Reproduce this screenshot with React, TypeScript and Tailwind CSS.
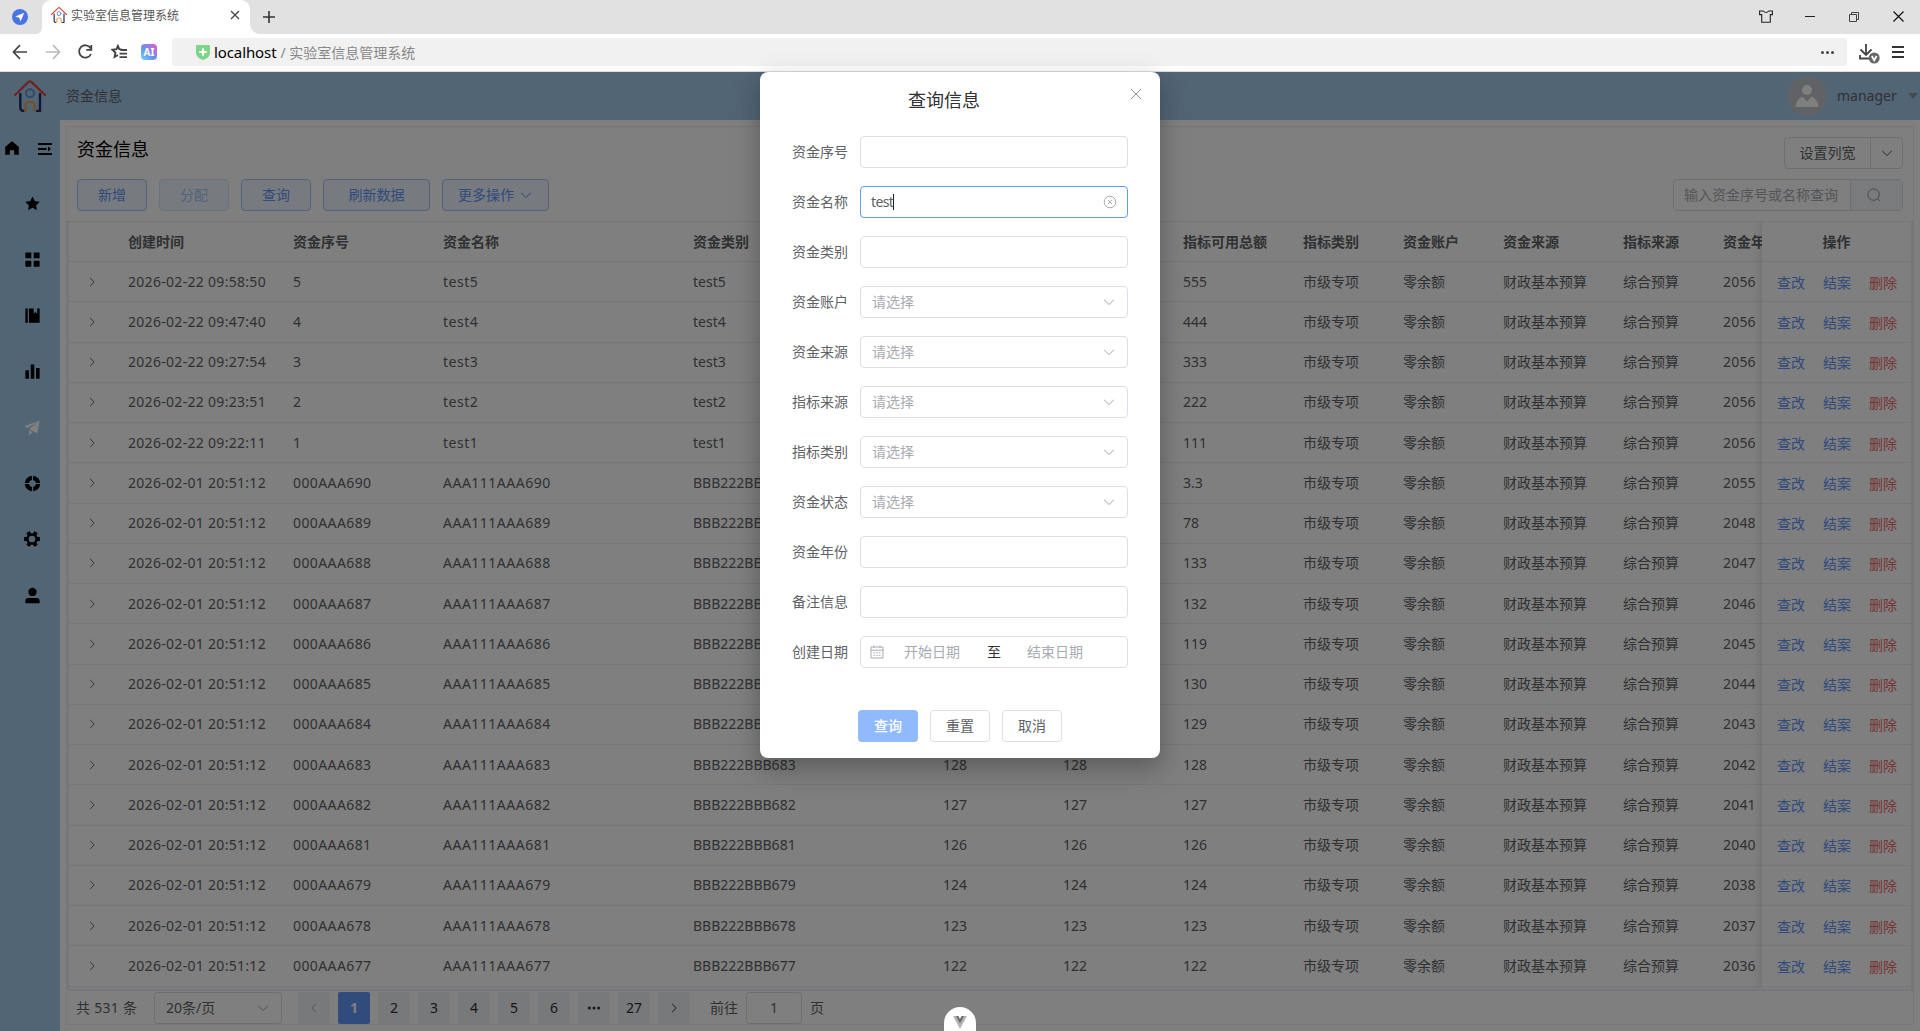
import React, { useState } from 'react';

const ICONS = {
  home: 'M512 128 128 447.936V896h255.936V640H640v256h255.936V447.936z',
  star: 'M283.84 867.84 512 747.776l228.16 119.936a6.4 6.4 0 0 0 9.28-6.72l-43.52-254.08 184.512-179.904a6.4 6.4 0 0 0-3.52-10.88l-255.104-37.12L517.76 147.904a6.4 6.4 0 0 0-11.52 0L392.192 379.072l-255.104 37.12a6.4 6.4 0 0 0-3.52 10.88L318.08 606.976l-43.584 254.08a6.4 6.4 0 0 0 9.28 6.72z',
  menu: 'M160 448a32 32 0 0 1-32-32V160.064a32 32 0 0 1 32-32h256a32 32 0 0 1 32 32V416a32 32 0 0 1-32 32zm448 0a32 32 0 0 1-32-32V160.064a32 32 0 0 1 32-32h255.936a32 32 0 0 1 32 32V416a32 32 0 0 1-32 32zM160 896a32 32 0 0 1-32-32V608a32 32 0 0 1 32-32h256a32 32 0 0 1 32 32v256a32 32 0 0 1-32 32zm448 0a32 32 0 0 1-32-32V608a32 32 0 0 1 32-32h255.936a32 32 0 0 1 32 32v256a32 32 0 0 1-32 32z',
  management: 'M576 128v288l96-96 96 96V128h128v768H320V128zm-448 0h128v768H128z',
  histogram: 'M416 896V128h192v768zm-288 0V448h192v448zm576 0V320h192v576z',
  promotion: 'm64 448 832-320-128 704-446.08-243.328L832 192 242.816 545.536zm256 512V657.024L512 768z',
  help: 'M926.784 480H701.312A192.512 192.512 0 0 0 544 322.688V97.216A416.064 416.064 0 0 1 926.784 480m0 64A416.064 416.064 0 0 1 544 926.784V701.312A192.512 192.512 0 0 0 701.312 544zM97.28 544h225.472A192.512 192.512 0 0 0 480 701.312v225.472A416.064 416.064 0 0 1 97.216 544zm0-64A416.064 416.064 0 0 1 480 97.216v225.472A192.512 192.512 0 0 0 322.688 480H97.216z',
  user: 'M288 320a224 224 0 1 0 448 0 224 224 0 1 0-448 0m544 608H160a32 32 0 0 1-32-32v-96a160 160 0 0 1 160-160h448a160 160 0 0 1 160 160v96a32 32 0 0 1-32 32z',
  arrowDown: 'M831.872 340.864 512 652.672 192.128 340.864a30.592 30.592 0 0 0-42.752 0 29.12 29.12 0 0 0 0 41.6L489.664 714.24a32 32 0 0 0 44.672 0l340.288-331.712a29.12 29.12 0 0 0 0-41.728 30.592 30.592 0 0 0-42.752 0z',
};

const Icon: React.FC<{ name: keyof typeof ICONS; className?: string }> = ({ name, className = '' }) => (
  <svg viewBox="0 0 1024 1024" fill="currentColor" className={`shrink-0 ${className}`}>
    <path d={ICONS[name]} />
  </svg>
);

const GearIcon = () => (
  <svg viewBox="0 0 16 16" className="h-4 w-4 shrink-0">
    <circle cx="8" cy="8" r="4.6" fill="none" stroke="currentColor" strokeWidth="2.5" />
    {[0, 60, 120, 180, 240, 300].map((angle) => (
      <rect key={angle} x="0.1" y="6.1" width="3" height="3.8" rx="0.5" fill="currentColor" transform={`rotate(${angle} 8 8)`} />
    ))}
  </svg>
);

const HouseLogo: React.FC<{ className?: string }> = ({ className = '' }) => (
  <svg viewBox="0 0 32 32" fill="none" strokeLinecap="round" strokeLinejoin="round" className={`shrink-0 ${className}`}>
    <path d="M1 15 L14.6 1.9 Q16 0.8 17.4 1.9 L31 15" stroke="#e0443e" strokeWidth="2.2" />
    <path d="M6.3 14 V27.5 Q6.5 31 9.5 31 M26 14 V31 H23" stroke="#2b2a6b" strokeWidth="2.4" />
    <circle cx="16" cy="13.2" r="4" stroke="#6c8fd6" strokeWidth="2" />
    <path d="M11.5 31 V25.5 Q11.5 22 16 22 Q20.5 22 20.5 25.5 V31" stroke="#e9a23f" strokeWidth="2.2" />
  </svg>
);

const columns = [
  { key: 'createTime', label: '创建时间', width: 'w-[165px]', tracking: 'tracking-[0.3px]' },
  { key: 'serial', label: '资金序号', width: 'w-[150px]', tracking: 'tracking-[0.4px]' },
  { key: 'name', label: '资金名称', width: 'w-[250px]', tracking: 'tracking-[0.5px]' },
  { key: 'category', label: '资金类别', width: 'w-[250px]', tracking: '' },
  { key: 'total', label: '资金总额', width: 'w-[120px]', tracking: '' },
  { key: 'quota', label: '指标总额', width: 'w-[120px]', tracking: '' },
  { key: 'available', label: '指标可用总额', width: 'w-[120px]', tracking: '' },
  { key: 'quotaType', label: '指标类别', width: 'w-[100px]', tracking: '' },
  { key: 'account', label: '资金账户', width: 'w-[100px]', tracking: '' },
  { key: 'source', label: '资金来源', width: 'w-[120px]', tracking: '' },
  { key: 'quotaSource', label: '指标来源', width: 'w-[100px]', tracking: '' },
  { key: 'year', label: '资金年份', width: 'w-[100px]', tracking: 'tracking-[0.2px]' },
];

type Row = Record<string, string>;

const makeRow = (createTime: string, serial: string, name: string, category: string, amount: string, year: string): Row => ({
  createTime,
  serial,
  name,
  category,
  total: amount,
  quota: amount,
  available: amount,
  quotaType: '市级专项',
  account: '零余额',
  source: '财政基本预算',
  quotaSource: '综合预算',
  year,
});

const batch: [number, string, string][] = [
  [690, '3.3', '2055'],
  [689, '78', '2048'],
  [688, '133', '2047'],
  [687, '132', '2046'],
  [686, '119', '2045'],
  [685, '130', '2044'],
  [684, '129', '2043'],
  [683, '128', '2042'],
  [682, '127', '2041'],
  [681, '126', '2040'],
  [679, '124', '2038'],
  [678, '123', '2037'],
  [677, '122', '2036'],
];

const rows: Row[] = [
  makeRow('2026-02-22 09:58:50', '5', 'test5', 'test5', '555', '2056'),
  makeRow('2026-02-22 09:47:40', '4', 'test4', 'test4', '444', '2056'),
  makeRow('2026-02-22 09:27:54', '3', 'test3', 'test3', '333', '2056'),
  makeRow('2026-02-22 09:23:51', '2', 'test2', 'test2', '222', '2056'),
  makeRow('2026-02-22 09:22:11', '1', 'test1', 'test1', '111', '2056'),
  ...batch.map(([no, amount, year]) =>
    makeRow('2026-02-01 20:51:12', `000AAA${no}`, `AAA111AAA${no}`, `BBB222BBB${no}`, amount, year)
  ),
];

const BrowserChrome = () => (
  <div className="h-[72px] shrink-0 bg-white">
    <div className="flex h-[34px] items-end bg-[#e1e1e1]">
      <div className="flex h-[34px] w-[42px] items-center justify-end pr-3.5">
        <svg viewBox="0 0 16 16" className="h-4 w-4">
          <circle cx="8" cy="8" r="8" fill="#4a73e8" />
          <path d="M12.2 3.8 L3.4 7.6 L7.3 8.7 L8.6 12.6 Z" fill="#fff" />
        </svg>
      </div>
      <div className="relative flex h-full w-[208px] items-center rounded-t-[9px] bg-white pl-[9px]">
        <HouseLogo className="mb-1 h-4 w-4" />
        <span className="mb-[2px] ml-1 text-[12px] text-[#555]">实验室信息管理系统</span>
        <svg viewBox="0 0 10 10" className="mb-1 ml-auto mr-[10px] h-2.5 w-2.5" stroke="#444" strokeWidth="1.3">
          <path d="M1 1 L9 9 M9 1 L1 9" />
        </svg>
        <svg viewBox="0 0 10 10" className="absolute -right-2.5 bottom-0 h-2.5 w-2.5" fill="#fff">
          <path d="M0 0 V10 H10 A10 10 0 0 1 0 0" />
        </svg>
        <svg viewBox="0 0 10 10" className="absolute -left-1.5 bottom-0 h-1.5 w-1.5" fill="#fff">
          <path d="M10 0 V10 H0 A10 10 0 0 0 10 0" />
        </svg>
      </div>
      <svg viewBox="0 0 12 12" className="mb-[11px] ml-[13px] h-3 w-3" stroke="#333" strokeWidth="1.6">
        <path d="M6 0 V12 M0 6 H12" />
      </svg>
      <div className="mb-[11px] ml-auto flex items-center pr-4">
        <svg viewBox="0 0 14 13" className="mr-[32px] h-[13px] w-[14px]" fill="none" stroke="#222" strokeWidth="1.1">
          <path d="M0.6 1 H4.3 Q7 4 9.7 1 H13.4 V4.6 H11.3 V12.3 H2.7 V4.6 H0.6 Z" />
        </svg>
        <span className="mr-[34px] h-px w-[10px] bg-[#222]" />
        <svg viewBox="0 0 10 10" className="mr-[34px] h-2.5 w-2.5" fill="none" stroke="#444">
          <path d="M0.5 2.5 H7.5 V9.5 H0.5 Z M2.5 2.5 V0.5 H9.5 V7.5 H7.5" />
        </svg>
        <svg viewBox="0 0 11 11" className="h-[11px] w-[11px]" stroke="#111" strokeWidth="1.2">
          <path d="M0.5 0.5 L10.5 10.5 M10.5 0.5 L0.5 10.5" />
        </svg>
      </div>
    </div>
    <div className="flex h-[38px] items-center border-b border-[#dcdcdc] pb-px pl-3 text-[#444]">
      <svg viewBox="0 0 16 16" className="h-4 w-4" fill="none" stroke="#444" strokeWidth="1.7">
        <path d="M15 8 H1.8 M8 1.2 L1.4 8 L8 14.8" />
      </svg>
      <svg viewBox="0 0 16 16" className="ml-[17px] h-4 w-4" fill="none" stroke="#bbb" strokeWidth="1.7">
        <path d="M1 8 H14.2 M8 1.2 L14.6 8 L8 14.8" />
      </svg>
      <svg viewBox="0 0 16 16" className="ml-4 h-4 w-4" fill="none" stroke="#444" strokeWidth="1.8">
        <path d="M13.6 4.2 A6.2 6.2 0 1 0 14 10 M14.3 1 V5.8 H9.3" />
      </svg>
      <svg viewBox="0 0 16 16" className="ml-[18px] h-4 w-4" fill="none" stroke="#444" strokeWidth="2">
        <path d="M11 5.6 L8.3 5.2 L6.9 2 L5.5 5.2 L1.4 5.7 L4.4 8.6 L3.6 13 L7 11" strokeWidth="1.9" />
        <path d="M9.5 6 H16 M8.5 9.6 H16 M8.5 13.2 H16" strokeWidth="1.8" />
      </svg>
      <span className="ml-[14px] flex h-4 w-4 items-center justify-center rounded bg-linear-to-tr from-[#6ad4f0] via-[#6a8cf0] to-[#e04ac8] text-[10px] font-bold text-white">
        AI
      </span>
      <div className="ml-[15px] flex h-7 w-[1675px] items-center rounded-[3px] bg-[#f1f1f1] pl-6">
        <svg viewBox="0 0 14 15" className="h-[15px] w-[14px]">
          <path d="M1 0 H13 Q14 0 14 1 V8 Q14 12.6 7 15 Q0 12.6 0 8 V1 Q0 0 1 0" fill="#7ed58a" />
          <path d="M7 3.3 V10.7 M3.3 7 H10.7" stroke="#fff" strokeWidth="2" />
        </svg>
        <span className="ml-[4px] text-[15px] tracking-[-0.1px] text-black">localhost</span>
        <span className="ml-1 text-[14px] text-[#888]">/ 实验室信息管理系统</span>
        <div className="ml-auto mr-[13px] flex gap-[2px]">
          <i className="h-[3px] w-[3px] rounded-full bg-[#444]" />
          <i className="h-[3px] w-[3px] rounded-full bg-[#444]" />
          <i className="h-[3px] w-[3px] rounded-full bg-[#444]" />
        </div>
      </div>
      <svg viewBox="0 0 21 20" className="ml-3 mt-[3px] h-5 w-[21px]" fill="none" stroke="#444" strokeWidth="1.8">
        <path d="M7 0 V11 M1.5 5.5 L7 11 L12.5 5.5 M1 11 V14.5 H10" />
        <circle cx="15.2" cy="14" r="5.5" fill="#666" stroke="none" />
        <path d="M12.8 12 L15.2 16.2 L17.6 12" stroke="#fff" />
      </svg>
      <svg viewBox="0 0 12 12" className="ml-3 h-3 w-3" stroke="#333" strokeWidth="1.8">
        <path d="M0 1 H12 M0 6 H12 M0 11 H12" />
      </svg>
    </div>
  </div>
);

const Sidebar = () => (
  <aside className="flex w-[60px] shrink-0 flex-col items-center bg-[#a4cbea] text-black">
    <div className="mt-[19px] flex h-[18px] w-full items-center justify-between pl-[3px] pr-[8px]">
      <Icon name="home" className="h-[18px] w-[18px]" />
      <svg viewBox="0 0 14 14" className="mt-0.5 h-3.5 w-3.5" stroke="currentColor" strokeWidth="1.8">
        <path d="M0 2 H14 M0 7 H8.5 M0 12 H14" />
        <path d="M10 4.6 L13 7 L10 9.4 Z" fill="currentColor" stroke="none" />
      </svg>
    </div>
    <div className="mt-[18px] flex flex-col pl-1">
      {(['star', 'menu', 'management', 'histogram', 'promotion', 'help', 'gear', 'user'] as const).map((name) => (
        <div key={name} className={`flex h-14 items-center justify-center ${name === 'promotion' ? 'text-white' : ''}`}>
          {name === 'gear' ? <GearIcon /> : <Icon name={name} className="h-[19px] w-[19px]" />}
        </div>
      ))}
    </div>
  </aside>
);

const plainButton = 'flex h-8 items-center justify-center rounded border text-sm';

const Toolbar = () => (
  <div className="flex h-[94px] shrink-0 justify-between px-[10px] pt-[10px]">
    <div>
      <h1 className="h-8 text-[18px] leading-[24px] text-black">资金信息</h1>
      <div className="mt-[10px] flex gap-3 text-[#6296f9]">
        <button className={`${plainButton} w-[70px] border-[#a0c3fc] bg-[#eff5ff]`}>新增</button>
        <button className={`${plainButton} w-[70px] border-[#d5e4fd] bg-[#eff5ff] text-[#a6c5fb]`}>分配</button>
        <button className={`${plainButton} w-[70px] border-[#a0c3fc] bg-[#eff5ff]`}>查询</button>
        <button className={`${plainButton} w-[107px] border-[#a0c3fc] bg-[#eff5ff]`}>刷新数据</button>
        <button className={`${plainButton} w-[107px] border-[#a0c3fc] bg-[#eff5ff]`}>
          更多操作
          <Icon name="arrowDown" className="ml-[5px] h-3.5 w-3.5" />
        </button>
      </div>
    </div>
    <div className="flex flex-col items-end gap-[10px] text-[#606266]">
      <div className="flex h-8 w-[119px] rounded border border-[#dcdfe6] text-sm">
        <button className="flex-1 border-r border-[#dcdfe6]">设置列宽</button>
        <button className="flex w-[31px] items-center justify-center">
          <Icon name="arrowDown" className="h-3.5 w-3.5" />
        </button>
      </div>
      <div className="flex h-8 w-[230px] overflow-hidden rounded border border-[#dcdfe6] text-sm">
        <input className="w-[177px] border-r border-[#dcdfe6] pl-[10px] placeholder:text-[#a8abb2]" placeholder="输入资金序号或名称查询" />
        <button className="flex flex-1 items-center justify-center bg-[#f5f7fa] pr-[5px] text-[#909399]">
          <svg viewBox="0 0 14 14" className="h-3.5 w-3.5" fill="none" stroke="currentColor">
            <circle cx="6.6" cy="6.6" r="5.7" />
            <path d="M10.6 10.6 L13 13" />
          </svg>
        </button>
      </div>
    </div>
  </div>
);

const DataTable = () => (
  <div className="relative flex h-[770px] shrink-0 overflow-hidden border-x-2 border-b-2 border-t border-[#ebeef5] text-sm text-[#606266]">
    <div className="w-[1693px] shrink-0 overflow-hidden">
      <div className="flex h-[40px] w-[1800px] items-center border-b border-[#ebeef5] pl-[59px] font-bold">
        {columns.map((col) => (
          <div key={col.key} className={`shrink-0 whitespace-nowrap ${col.width}`}>{col.label}</div>
        ))}
      </div>
      {rows.map((row) => (
        <div key={row.name} className="flex h-[40.25px] w-[1800px] items-center border-b border-[#ebeef5]">
          <div className="w-[59px] shrink-0 pl-[17px]">
            <Icon name="arrowDown" className="h-3 w-3 -rotate-90" />
          </div>
          {columns.map((col) => (
            <div key={col.key} className={`shrink-0 whitespace-nowrap ${col.width} ${col.tracking}`}>{row[col.key]}</div>
          ))}
        </div>
      ))}
    </div>
    <div className="z-10 flex-1 bg-white shadow-[-2px_0_10px_rgba(0,0,0,0.12)]">
      <div className="flex h-[40px] items-center justify-center border-b border-[#ebeef5] font-bold">操作</div>
      {rows.map((row) => (
        <div key={row.name} className="flex h-[40.25px] items-center gap-[18px] border-b border-[#ebeef5] pl-[15px] pt-[2px]">
          <a className="text-[#6296f9]">查改</a>
          <a className="text-[#6296f9]">结案</a>
          <a className="text-[#ec6a6a]">删除</a>
        </div>
      ))}
    </div>
  </div>
);

const Pagination = () => {
  const [page, setPage] = useState('1');
  const pages = ['1', '2', '3', '4', '5', '6', '•••', '27'];

  return (
    <div className="flex h-[33px] shrink-0 items-center pl-[9px] text-sm text-[#606266]">
      <span className="w-[78px] tracking-[0.3px]">共 531 条</span>
      <div className="flex h-8 w-[128px] items-center justify-between rounded border border-[#dcdfe6] pl-[11px] pr-[11px]">
        20条/页
        <Icon name="arrowDown" className="h-3.5 w-3.5 text-[#a8abb2]" />
      </div>
      <div className="ml-4 flex gap-2 text-[#303133]">
        <button className="flex h-8 w-8 items-center justify-center rounded-[2px] bg-[#f0f2f5] text-[#a8abb2]">
          <Icon name="arrowDown" className="h-3 w-3 rotate-90" />
        </button>
        {pages.map((p) => (
          <button
            key={p}
            onClick={() => setPage(p)}
            className={`flex h-8 w-8 items-center justify-center rounded-[2px] ${
              p === page ? 'bg-[#6296f9] font-bold text-white' : 'bg-[#f0f2f5]'
            }`}
          >
            {p === '•••' ? (
              <svg viewBox="0 0 14 4" className="h-1 w-3.5" fill="currentColor">
                <circle cx="2.4" cy="2" r="1.5" />
                <circle cx="7" cy="2" r="1.5" />
                <circle cx="11.6" cy="2" r="1.5" />
              </svg>
            ) : (
              p
            )}
          </button>
        ))}
        <button className="flex h-8 w-8 items-center justify-center rounded-[2px] bg-[#f0f2f5]">
          <Icon name="arrowDown" className="h-3 w-3 -rotate-90" />
        </button>
      </div>
      <span className="ml-5 w-[36px]">前往</span>
      <div className="flex h-8 w-14 items-center justify-center rounded border border-[#dcdfe6]">1</div>
      <span className="ml-2">页</span>
    </div>
  );
};

const fields = [
  { label: '资金序号', type: 'input' },
  { label: '资金名称', type: 'name' },
  { label: '资金类别', type: 'input' },
  { label: '资金账户', type: 'select' },
  { label: '资金来源', type: 'select' },
  { label: '指标来源', type: 'select' },
  { label: '指标类别', type: 'select' },
  { label: '资金状态', type: 'select' },
  { label: '资金年份', type: 'input' },
  { label: '备注信息', type: 'input' },
  { label: '创建日期', type: 'date' },
];

const QueryDialog = () => (
  <div className="relative h-[686px] w-[400px] rounded-[8px] bg-white text-sm text-[#606266] shadow-[0_12px_32px_4px_rgba(0,0,0,0.12),0_8px_20px_rgba(0,0,0,0.16)]">
    <svg viewBox="0 0 12 12" className="absolute right-[18px] top-4 h-3 w-3" stroke="#909399">
      <path d="M1 1 L11 11 M11 1 L1 11" />
    </svg>
    <div className="flex h-16 items-center justify-center pb-1.5 pr-8 text-[18px] text-[#303133]">查询信息</div>
    <div className="flex flex-col gap-[18px] px-8">
      {fields.map((field) => (
        <div key={field.label} className="flex items-center">
          <label className="w-[68px]">{field.label}</label>
          <div
            className={`flex h-8 w-[268px] items-center rounded border ${
              field.type === 'name' ? 'border-[#609bf8]' : 'border-[#dcdfe6]'
            }`}
          >
            {field.type === 'name' && (
              <>
                <span className="ml-[10px] tracking-[-0.6px]">test</span>
                <span className="h-4 w-px bg-[#222]" />
                <svg viewBox="0 0 14 14" className="ml-auto mr-[10px] h-3.5 w-3.5" fill="none" stroke="#a8abb2">
                  <circle cx="7" cy="7" r="5.8" />
                  <path d="M5 5 L9 9 M9 5 L5 9" />
                </svg>
              </>
            )}
            {field.type === 'select' && (
              <>
                <span className="ml-[11px] text-[#a8abb2]">请选择</span>
                <Icon name="arrowDown" className="ml-auto mr-[11px] h-3.5 w-3.5 text-[#a8abb2]" />
              </>
            )}
            {field.type === 'date' && (
              <>
                <svg viewBox="0 0 14 14" className="ml-[9px] h-3.5 w-3.5" fill="none" stroke="#a8abb2">
                  <path d="M1 2 H13 V13 H1 Z M1 5.2 H13 M4 0.5 V3 M10 0.5 V3" />
                  <path d="M3.5 7.7 H10.5 M3.5 10.3 H10.5" strokeDasharray="1.6 1.1" />
                </svg>
                <span className="ml-5 w-[83px] text-[#a8abb2]">开始日期</span>
                <span className="w-[40px] text-[#303133]">至</span>
                <span className="text-[#a8abb2]">结束日期</span>
              </>
            )}
          </div>
        </div>
      ))}
    </div>
    <div className="mt-[42px] flex justify-center gap-3">
      <button className="h-8 w-[60px] rounded bg-[#90bafb] font-medium text-white">查询</button>
      <button className="h-8 w-[60px] rounded border border-[#dcdfe6]">重置</button>
      <button className="h-8 w-[60px] rounded border border-[#dcdfe6]">取消</button>
    </div>
  </div>
);

const App: React.FC = () => {
  return (
    <div className="flex h-[1031px] w-[1920px] flex-col overflow-hidden bg-white font-['Noto_Sans','Noto_Sans_CJK_SC',sans-serif]">
      <BrowserChrome />
      <div className="relative flex flex-1 flex-col">
        <header className="flex h-12 shrink-0 items-center bg-[#a4cbea] pl-[14px] text-sm text-[#606266]">
          <HouseLogo className="h-8 w-8" />
          <span className="ml-5">资金信息</span>
          <span className="ml-auto flex h-10 w-10 items-center justify-center rounded-full bg-[#c0c4cc] text-white">
            <svg viewBox="0 0 24 24" className="h-6 w-6" fill="currentColor">
              <circle cx="12" cy="6" r="5" />
              <path d="M0.5 23 Q1 15 7.5 12.5 L12 17.5 L16.5 12.5 Q23 15 23.5 23 Z" />
            </svg>
          </span>
          <span className="ml-[10px] w-[71px]">manager</span>
          <svg viewBox="0 0 10 6" className="mr-[2px] h-1.5 w-2.5" fill="#909399">
            <path d="M0 0 H10 L5 6 Z" />
          </svg>
        </header>
        <div className="flex flex-1">
          <Sidebar />
          <main className="flex-1 py-1.5 pl-1.5 pr-[6px]">
            <div className="flex h-[899px] flex-col border border-[#ebeef5]">
              <Toolbar />
              <DataTable />
              <Pagination />
            </div>
          </main>
        </div>
        <div className="absolute inset-0 z-20 flex items-start justify-center bg-black/50">
          <QueryDialog />
        </div>
        {/* devtools toggle */}
        <div className="absolute bottom-0 left-[944px] z-30 flex h-6 w-8 justify-center rounded-t-2xl bg-white pt-[9px]">
          <svg viewBox="0 0 14 13" className="h-[13px] w-3.5">
            <path d="M0 0 H14 L7 13 Z" fill="#b5b5b5" />
            <path d="M3 0 H11 L7 7.5 Z" fill="#6b6b6b" />
            <path d="M5.4 0 H8.6 L7 3 Z" fill="#fff" />
          </svg>
        </div>
      </div>
    </div>
  );
};

export default App;
